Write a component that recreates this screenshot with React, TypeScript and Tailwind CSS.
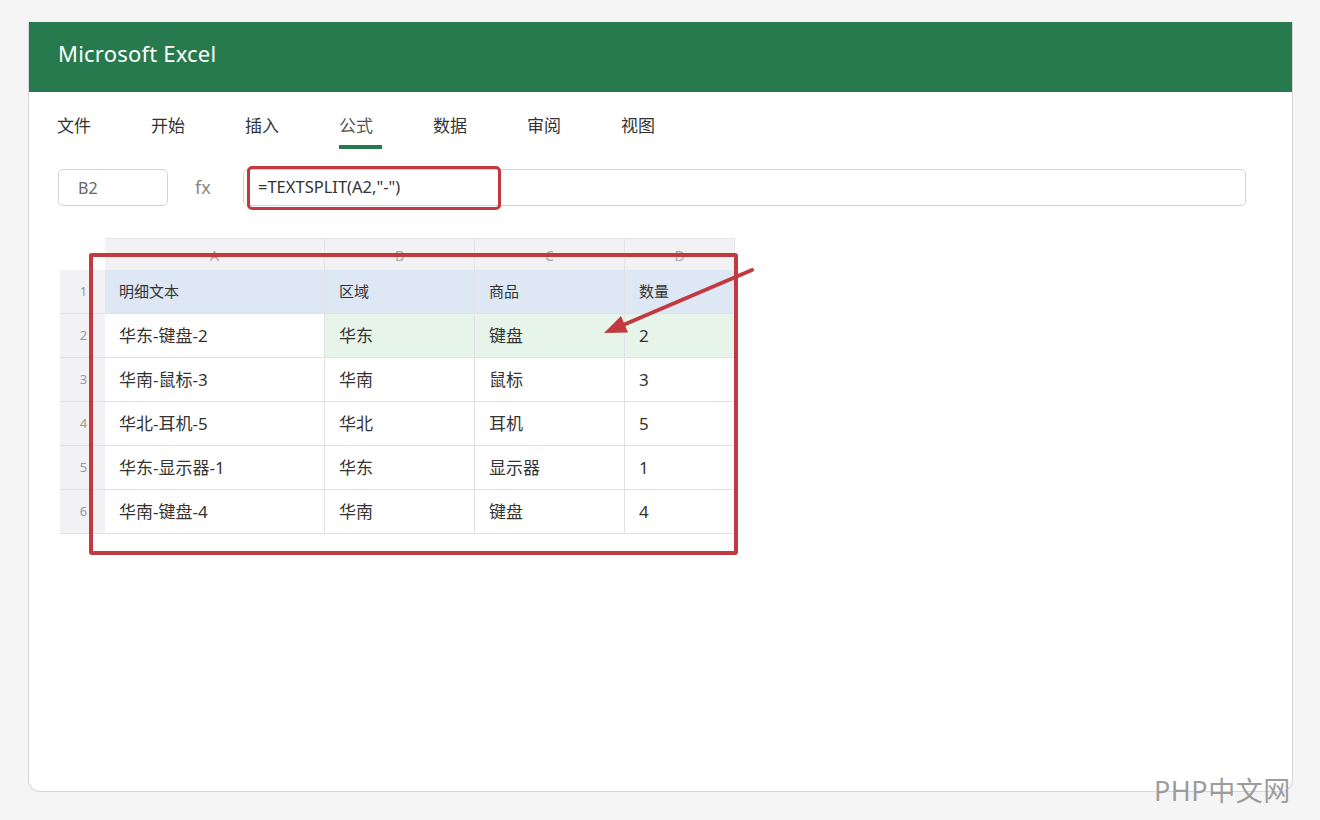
import React from "react";

const tabs = ["文件", "开始", "插入", "公式", "数据", "审阅", "视图"];

const cols = [
  { key: "A", w: "w-[220px]" },
  { key: "B", w: "w-[150px]" },
  { key: "C", w: "w-[150px]" },
  { key: "D", w: "w-[110px]" },
];

const rows = [
  ["明细文本", "区域", "商品", "数量"],
  ["华东-键盘-2", "华东", "键盘", "2"],
  ["华南-鼠标-3", "华南", "鼠标", "3"],
  ["华北-耳机-5", "华北", "耳机", "5"],
  ["华东-显示器-1", "华东", "显示器", "1"],
  ["华南-键盘-4", "华南", "键盘", "4"],
];

function cellBg(r: number, c: number) {
  if (r === 0) return "bg-[#dde8f4]";
  if (r === 1 && c > 0) return "bg-[#e7f4e9]";
  return "bg-white";
}

function Sheet() {
  return (
    <div className="relative mt-[32px] ml-[3px] w-[680px]">
      {/* column letters */}
      <div className="flex h-[32px]">
        <div className="w-[45px]" />
        {cols.map((c) => (
          <div
            key={c.key}
            className={`${c.w} flex items-center justify-center pt-[2px] border-t border-r border-[#e4e4e8] bg-[#f2f2f5] text-[14px] text-[#a5a5a5]`}
          >
            {c.key}
          </div>
        ))}
      </div>
      {rows.map((row, r) => (
        <div key={r} className="flex h-[44px]">
          <div className="w-[45px] flex items-center justify-center border-b border-[#e2e2e6] bg-[#f2f2f5] pl-[2px] text-[13px] text-[#999]">
            {r + 1}
          </div>
          {row.map((v, c) => (
            <div
              key={c}
              className={`${cols[c].w} ${cellBg(r, c)} flex items-center border-r border-b border-[#e2e2e6] pl-[14px] text-[#333] ${
                r === 0 ? "text-[15px]" : "text-[17px]"
              }`}
            >
              {v}
            </div>
          ))}
        </div>
      ))}

      {/* highlight box */}
      <div className="absolute left-[29px] top-[15px] w-[649px] h-[302px] border-[4px] border-[#c23a40] rounded-[3px]" />

      {/* arrow */}
      <svg className="absolute left-0 top-0 overflow-visible" width="720" height="320" viewBox="0 0 720 320">
        <line x1="692" y1="32" x2="562" y2="87.5" stroke="#c23a40" strokeWidth="4" strokeLinecap="round" />
        <polygon points="544,95 568,94.5 561,78" fill="#c23a40" />
      </svg>
    </div>
  );
}

export default function App() {
  return (
    <div
      className="relative w-[1320px] h-[820px] bg-[#f5f5f6] pt-[22px] pl-[28px]"
      style={{ fontFamily: '"Noto Sans", "Noto Sans CJK SC", sans-serif' }}
    >
      <div className="w-[1265px] h-[770px] bg-white border-x-[1.5px] border-b-[1.5px] border-[#d6d6d8] rounded-b-[12px] overflow-hidden">
        <div className="h-[70px] bg-[#267a4d] flex items-center pl-[29px] pb-[8px] text-[22px] text-white tracking-[0.2px]">
          Microsoft Excel
        </div>

        <div className="pl-[28px] pr-[46px]">
          <div className="flex pt-[22px]">
            {tabs.map((t) => (
              <div key={t} className="w-[94px] flex flex-col items-start">
                <span className={`text-[17px] leading-[24px] ${t === "公式" ? "text-[#555]" : "text-[#333]"}`}>{t}</span>
                <div className={`mt-[7px] h-[4px] w-[43px] ${t === "公式" ? "bg-[#267a4d]" : "bg-transparent"}`} />
              </div>
            ))}
          </div>

          <div className="mt-[20px] ml-[1px] flex h-[37px] items-stretch">
            <div className="w-[110px] border-[1.5px] border-[#d4d4d6] rounded-[5px] flex items-center pl-[19px] text-[16px] text-[#666]">
              B2
            </div>
            <div className="w-[75px] flex items-center pl-[27px] text-[18px] text-[#888]">fx</div>
            <div className="relative flex-1 border-[1.5px] border-[#d4d4d6] rounded-[5px] flex items-center pl-[14px] text-[16.5px] text-[#333]">
              =TEXTSPLIT(A2,"-")
              <div className="absolute left-[3px] -top-[4px] w-[254px] h-[44px] border-[3px] border-[#c23a40] rounded-[5px]" />
            </div>
          </div>

          <Sheet />
        </div>
      </div>

      <div className="absolute left-[1154px] top-[774px] text-[27px] leading-[34px] tracking-[0.5px] text-[#9c9c9c]">
        PHP中文网
      </div>
    </div>
  );
}
